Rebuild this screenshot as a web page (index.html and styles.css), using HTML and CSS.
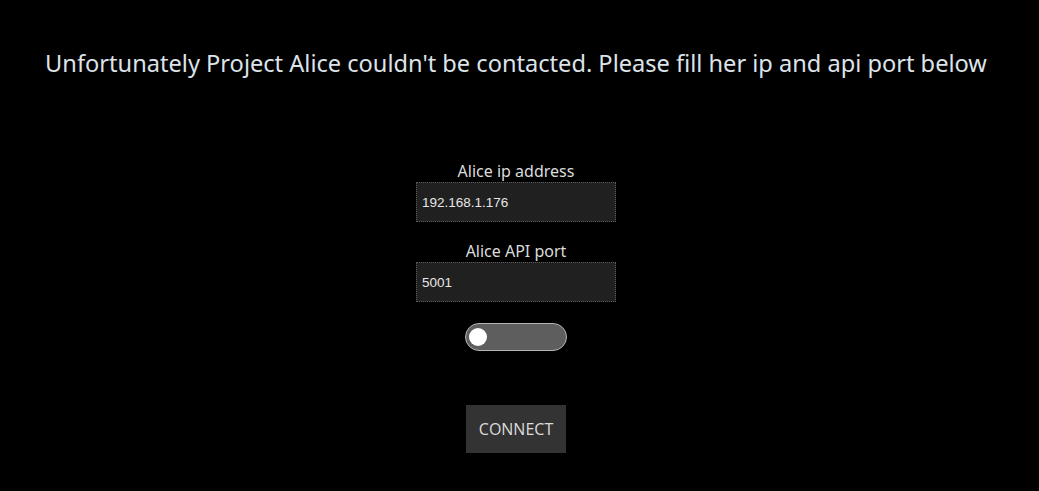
FILE: index.html
```html
<!DOCTYPE html>
<html>
<head>
<meta charset="utf-8">
<link rel="stylesheet" href="styles.css">
</head>
<body>
<div class="page">
  <h1 class="title">Unfortunately Project Alice couldn't be contacted. Please fill her ip and api port below</h1>
  <form class="form">
    <label class="field">
      <span class="label">Alice ip address</span>
      <input class="input" type="text" value="192.168.1.176">
    </label>
    <label class="field field-second">
      <span class="label">Alice API port</span>
      <input class="input" type="text" value="5001">
    </label>
    <div class="toggle"><span class="knob"></span></div>
    <button class="button" type="button">CONNECT</button>
  </form>
</div>
</body>
</html>
```
FILE: styles.css
```css
html, body {
  margin: 0;
  padding: 0;
  background: #000;
}
.page {
  width: 1032px;
  height: 491px;
  display: flex;
  flex-direction: column;
  align-items: center;
  font-family: "Noto Sans", "Open Sans", sans-serif;
  color: #dcdcdc;
}
.title {
  margin: 48px 0 0;
  font-size: 23.6px;
  font-weight: 400;
  line-height: 30px;
  color: #dde3e8;
  white-space: nowrap;
}
.form {
  margin-top: 82px;
  display: flex;
  flex-direction: column;
  align-items: center;
}
.field {
  display: flex;
  flex-direction: column;
  align-items: center;
}
.field-second {
  margin-top: 18px;
}
.label {
  font-size: 16px;
  line-height: 22px;
  color: #dcdcdc;
}
.input {
  box-sizing: border-box;
  width: 200px;
  height: 40px;
  margin: 0;
  padding: 0 5px;
  background: #202020;
  border: 1px dotted #5a5a5a;
  color: #e6e6e6;
  font-family: "Liberation Sans", Arial, sans-serif;
  font-size: 13.5px;
  outline: none;
}
.toggle {
  box-sizing: border-box;
  margin-top: 21px;
  width: 102px;
  height: 28px;
  border-radius: 14px;
  background: #5e5e5e;
  border: 1px solid #b4b4b4;
  display: flex;
  align-items: center;
  padding-left: 3px;
}
.knob {
  width: 18px;
  height: 18px;
  border-radius: 50%;
  background: #fff;
}
.button {
  margin-top: 54px;
  width: 100px;
  height: 48px;
  background: #333333;
  border: none;
  color: #dcdcdc;
  font-family: "Open Sans", "Noto Sans", sans-serif;
  font-size: 16px;
  padding: 0;
}
```
